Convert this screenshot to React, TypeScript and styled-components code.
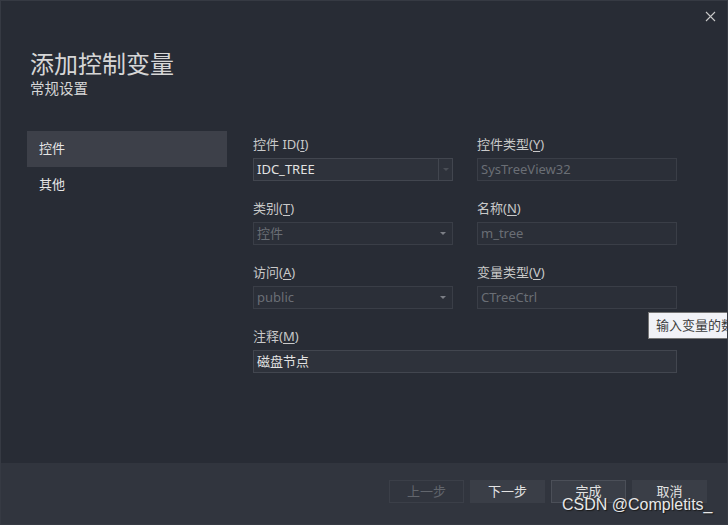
import React from "react";
import styled, { createGlobalStyle } from "styled-components";

const GlobalStyle = createGlobalStyle`
    html, body {
        margin: 0;
        padding: 0;
        background: #282c35;
    }
    body {
        font-family: "Segoe UI", "Noto Sans", "Noto Sans CJK SC", sans-serif;
    }
`;

const Dialog = styled.div`
    position: relative;
    width: 728px;
    height: 525px;
    box-sizing: border-box;
    border: 1px solid #363a43;
    background-color: #282c35;
    display: flex;
    flex-direction: column;
    overflow: hidden;
`;

const TitleBar = styled.div`
    height: 30px;
    display: flex;
    justify-content: flex-end;
    align-items: center;
    padding-right: 10px;
`;

const CloseButton = styled.div`
    width: 14px;
    height: 14px;
    display: flex;
    align-items: center;
    justify-content: center;
`;

const Header = styled.div`
    padding: 17px 0 0 29px;
    height: 82px;
    box-sizing: border-box;
`;

const Title = styled.div`
    font-size: 24px;
    line-height: 32px;
    color: #d6d6d6;
`;

const SubTitle = styled.div`
    font-size: 14.5px;
    line-height: 17px;
    color: #d6d6d6;
`;

const Body = styled.div`
    flex: 1;
    display: flex;
    padding-top: 18px;
    padding-left: 26px;
`;

const Nav = styled.div`
    width: 200px;
    display: flex;
    flex-direction: column;
`;

const NavItem = styled.div<{ active?: boolean }>`
    height: 36px;
    line-height: 35px;
    padding-left: 12px;
    font-size: 13px;
    color: #e6e6e6;
    background-color: ${(p) => (p.active ? "#3d4049" : "transparent")};
`;

const Form = styled.div`
    margin-left: 26px;
    display: grid;
    grid-template-columns: 200px 200px;
    column-gap: 24px;
    row-gap: 18px;
    align-content: start;
    padding-top: 4px;
`;

const Field = styled.div<{ wide?: boolean }>`
    display: flex;
    flex-direction: column;
    grid-column: ${(p) => (p.wide ? "1 / span 2" : "auto")};
`;

const Label = styled.div`
    font-size: 13px;
    line-height: 18px;
    height: 18px;
    color: #c9c9c9;
    margin-bottom: 5px;

    u {
        text-decoration: underline;
        text-underline-offset: 2px;
    }
`;

const Input = styled.div<{ disabled?: boolean }>`
    height: 23px;
    box-sizing: border-box;
    border: 1px solid ${(p) => (p.disabled ? "#3a3e47" : "#42464f")};
    background-color: ${(p) => (p.disabled ? "#2b2f38" : "#2e323b")};
    color: ${(p) => (p.disabled ? "#6a6e75" : "#e2e2e2")};
    font-size: 13px;
    line-height: 21px;
    padding-left: 3px;
    display: flex;
    align-items: center;
    justify-content: space-between;
`;

const DropButton = styled.div<{ split?: boolean }>`
    width: 13px;
    height: 100%;
    display: flex;
    align-items: center;
    justify-content: center;
    border-left: ${(p) => (p.split ? "1px solid #42464f" : "none")};
    margin-right: ${(p) => (p.split ? "0" : "3px")};
`;

const Arrow = styled.div<{ dim?: boolean }>`
    width: 0;
    height: 0;
    border-left: 3px solid transparent;
    border-right: 3px solid transparent;
    border-top: 3px solid ${(p) => (p.dim ? "#4a4e56" : "#7c7f86")};
`;

const Tooltip = styled.div`
    position: absolute;
    left: 647px;
    top: 311px;
    height: 27px;
    box-sizing: border-box;
    padding: 0 8px 0 7px;
    border: 1px solid #767676;
    background-color: #f1f2f7;
    color: #3c3c3c;
    font-size: 13px;
    line-height: 25px;
    white-space: nowrap;
`;

const Footer = styled.div`
    height: 61px;
    background-color: #31353e;
    display: flex;
    justify-content: flex-end;
    align-items: flex-start;
    padding: 17px 20px 0 0;
    box-sizing: border-box;
    gap: 6px;
`;

const Button = styled.div<{ disabled?: boolean; primary?: boolean }>`
    width: 75px;
    height: 23px;
    box-sizing: border-box;
    font-size: 13px;
    line-height: 21px;
    text-align: center;
    color: ${(p) => (p.disabled ? "#62666d" : "#e2e2e2")};
    background-color: ${(p) => (p.disabled ? "#31353e" : "#3a3e47")};
    border: 1px solid ${(p) => (p.disabled ? "#3b3f48" : p.primary ? "#4b4f58" : "#3a3e47")};
`;

const Watermark = styled.div`
    position: absolute;
    left: 561px;
    top: 494px;
    font-family: "Liberation Sans", Arial, sans-serif;
    font-size: 16px;
    line-height: 20px;
    color: #e8e8e8;
    text-shadow: 1px 1px 1px #1a1a1a;
    white-space: nowrap;
`;

const Select: React.FC<{ value: string; disabled?: boolean; split?: boolean }> = ({ value, disabled, split }) => (
    <Input disabled={disabled}>
        <span>{value}</span>
        <DropButton split={split}>
            <Arrow dim={split} />
        </DropButton>
    </Input>
);

const App: React.FC = () => {
    return (
        <>
            <GlobalStyle />
            <Dialog>
                <TitleBar>
                    <CloseButton>
                        <svg width="11" height="11" viewBox="0 0 11 11">
                            <path d="M1 1L10 10M10 1L1 10" stroke="#c8c8c8" strokeWidth="1.1" />
                        </svg>
                    </CloseButton>
                </TitleBar>
                <Header>
                    <Title>添加控制变量</Title>
                    <SubTitle>常规设置</SubTitle>
                </Header>
                <Body>
                    <Nav>
                        <NavItem active>控件</NavItem>
                        <NavItem>其他</NavItem>
                    </Nav>
                    <Form>
                        <Field>
                            <Label>控件 ID(<u>I</u>)</Label>
                            <Select value="IDC_TREE" split />
                        </Field>
                        <Field>
                            <Label>控件类型(<u>Y</u>)</Label>
                            <Input disabled>SysTreeView32</Input>
                        </Field>
                        <Field>
                            <Label>类别(<u>T</u>)</Label>
                            <Select value="控件" disabled />
                        </Field>
                        <Field>
                            <Label>名称(<u>N</u>)</Label>
                            <Input disabled>m_tree</Input>
                        </Field>
                        <Field>
                            <Label>访问(<u>A</u>)</Label>
                            <Select value="public" disabled />
                        </Field>
                        <Field>
                            <Label>变量类型(<u>V</u>)</Label>
                            <Input disabled>CTreeCtrl</Input>
                        </Field>
                        <Field wide>
                            <Label>注释(<u>M</u>)</Label>
                            <Input>磁盘节点</Input>
                        </Field>
                    </Form>
                </Body>
                <Footer>
                    <Button disabled>上一步</Button>
                    <Button>下一步</Button>
                    <Button primary>完成</Button>
                    <Button>取消</Button>
                </Footer>
                <Tooltip>输入变量的数据类型</Tooltip>
                <Watermark>CSDN @Completits_</Watermark>
            </Dialog>
        </>
    );
};

export default App;
